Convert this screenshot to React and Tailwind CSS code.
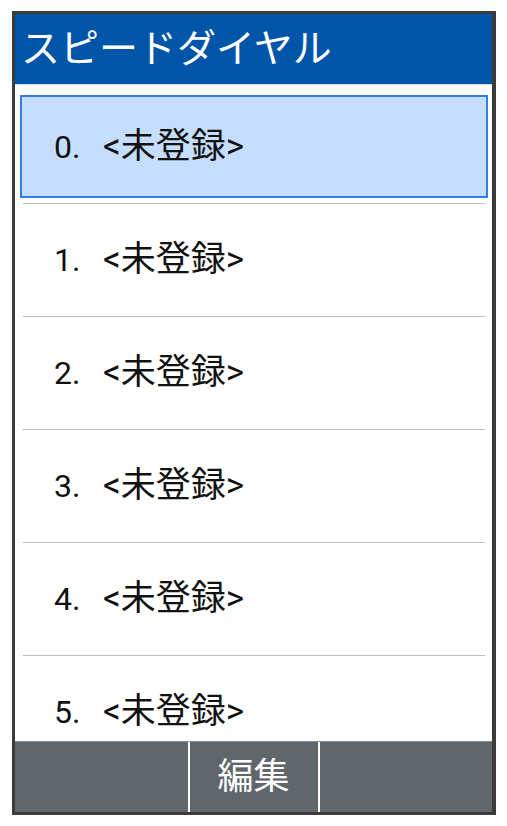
import React from "react";

const ENTRIES = [0, 1, 2, 3, 4, 5];
const FONT = { fontFamily: 'Roboto, "Noto Sans CJK JP", sans-serif' };

function DialRow({ num, selected }) {
  return (
    <div className="flex flex-col shrink-0">
      <div className="h-[112px] pt-[4px] pb-[5px] pl-[5px] pr-[4px]">
        <div className={["h-full flex items-center pl-[32px] border-2", selected ? "border-[#2f80e2] bg-[#c5defd]" : "border-transparent bg-white"].join(" ")}>
          <span className="w-[49px] text-[32px] leading-none text-[#111]">{num}.</span>
          <span className="text-[35px] leading-none text-[#111]">&lt;未登録&gt;</span>
        </div>
      </div>
      <div className="ml-[8px] mr-[7px] h-px bg-[#bdbdbd]" />
    </div>
  );
}

export default function App() {
  return (
    <div className="min-h-screen bg-white pt-[11px] pl-[12px]" style={FONT}>
      <div className="w-[484px] h-[804px] border-[3px] border-r-4 border-[#3b3b3b] flex flex-col overflow-hidden">
        <div className="h-[70px] shrink-0 bg-[#0055a9] flex items-center pl-[6px]">
          <h1 className="text-[39px] leading-none text-white font-normal">スピードダイヤル</h1>
        </div>
        <div className="flex-1 overflow-hidden bg-white border-t border-[#dadada] pt-[6px] flex flex-col">
          {ENTRIES.map((n) => <DialRow key={n} num={n} selected={n === 0} />)}
        </div>
        <div className="h-[71px] shrink-0 bg-[#5f676b] border-t border-[#8a9094] grid grid-cols-[1fr_2px_128px_2px_1fr]">
          <div />
          <div className="bg-white" />
          <div className="flex items-center justify-center text-[36px] leading-none text-white">編集</div>
          <div className="bg-white" />
          <div />
        </div>
      </div>
    </div>
  );
}
